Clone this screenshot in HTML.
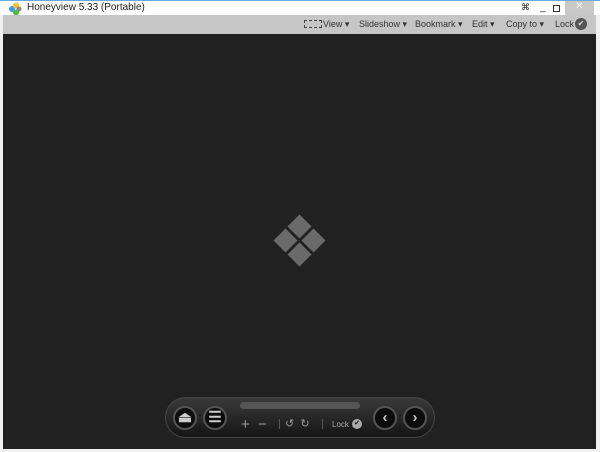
<!DOCTYPE html>
<html><head><style>
*{margin:0;padding:0;box-sizing:border-box}
body{width:600px;height:452px;background:#f0f0f0;font-family:"Liberation Sans",sans-serif;position:relative;overflow:hidden}
.title{position:absolute;left:0;top:0;width:600px;height:15px;background:#fff;border-top:1px solid #6aa9e0}
.title span{position:absolute;left:27px;top:1px;font-size:10px;color:#222}
.tb{position:absolute;left:3px;top:15px;width:593px;height:19px;background:#c6c6c6}
.tb span{position:absolute;top:4px;font-size:9px;color:#333}
.main{position:absolute;left:3px;top:34px;width:593px;height:415px;background:#212121}
.pill{position:absolute;left:165px;top:397px;width:270px;height:41px;border-radius:21px;background:linear-gradient(#3a3a3a,#151515);border:1px solid #444}
.c{position:absolute;width:24px;height:24px;border-radius:50%;background:#0c0c0c;border:2px solid #555;color:#ccc;font-size:15px;text-align:center;line-height:20px;font-weight:bold}
.sq{position:absolute;width:17px;height:17px;background:#6a6a6a;transform:rotate(45deg)}
</style></head><body>
<div class="title">
<svg style="position:absolute;left:8px;top:1px" width="14" height="14"><circle cx="4" cy="7" r="3" fill="#3a9de8"/><circle cx="8" cy="3.5" r="3" fill="#f5c02a"/><circle cx="8" cy="10.5" r="3" fill="#4cc23a"/><circle cx="11" cy="7" r="2.5" fill="#888"/></svg>
<span>Honeyview 5.33 (Portable)</span>
<span style="left:521px;font-size:9px">⌘</span>
<span style="left:540px">_</span>
<div style="position:absolute;left:553px;top:4px;width:7px;height:7px;border:1px solid #333"></div>
<div style="position:absolute;left:565px;top:0;width:29px;height:14px;background:#c8c8c8;color:#fff;font-size:10px;text-align:center">✕</div>
</div>
<div class="tb">
<div style="position:absolute;left:301px;top:5px;width:18px;height:8px;border:1px dashed #444"></div>
<span style="left:320px">View ▾</span>
<span style="left:356px">Slideshow ▾</span>
<span style="left:412px">Bookmark ▾</span>
<span style="left:469px">Edit ▾</span>
<span style="left:503px">Copy to ▾</span>
<span style="left:552px">Lock</span>
<div style="position:absolute;left:572px;top:3px;width:12px;height:12px;border-radius:50%;background:#555;color:#ddd;font-size:8px;text-align:center;line-height:12px">✔</div>
</div>
<div class="main"></div>
<div class="sq" style="left:276.5px;top:231.5px"></div>
<div class="sq" style="left:290.5px;top:217.5px"></div>
<div class="sq" style="left:304.5px;top:231.5px"></div>
<div class="sq" style="left:290.5px;top:245.5px"></div>
<div class="pill"></div>
<div style="position:absolute;left:240px;top:402px;width:120px;height:7px;border-radius:4px;background:#555"></div>
<div class="c" style="left:173px;top:406px">⏏</div>
<div class="c" style="left:203px;top:406px">☰</div>
<div class="c" style="left:373px;top:406px">‹</div>
<div class="c" style="left:403px;top:406px">›</div>
<div style="position:absolute;left:241px;top:416px;font-size:15px;color:#999">+ &nbsp;−</div>
<div style="position:absolute;left:279px;top:419px;width:1px;height:10px;background:#555"></div>
<div style="position:absolute;left:285px;top:417px;font-size:11px;color:#999">↺ &nbsp;↻</div>
<div style="position:absolute;left:322px;top:419px;width:1px;height:10px;background:#555"></div>
<div style="position:absolute;left:332px;top:420px;font-size:8px;color:#aaa">Lock</div>
<div style="position:absolute;left:352px;top:419px;width:10px;height:10px;border-radius:50%;background:#aaa;color:#111;font-size:7px;text-align:center;line-height:10px">✔</div>
</body></html>
